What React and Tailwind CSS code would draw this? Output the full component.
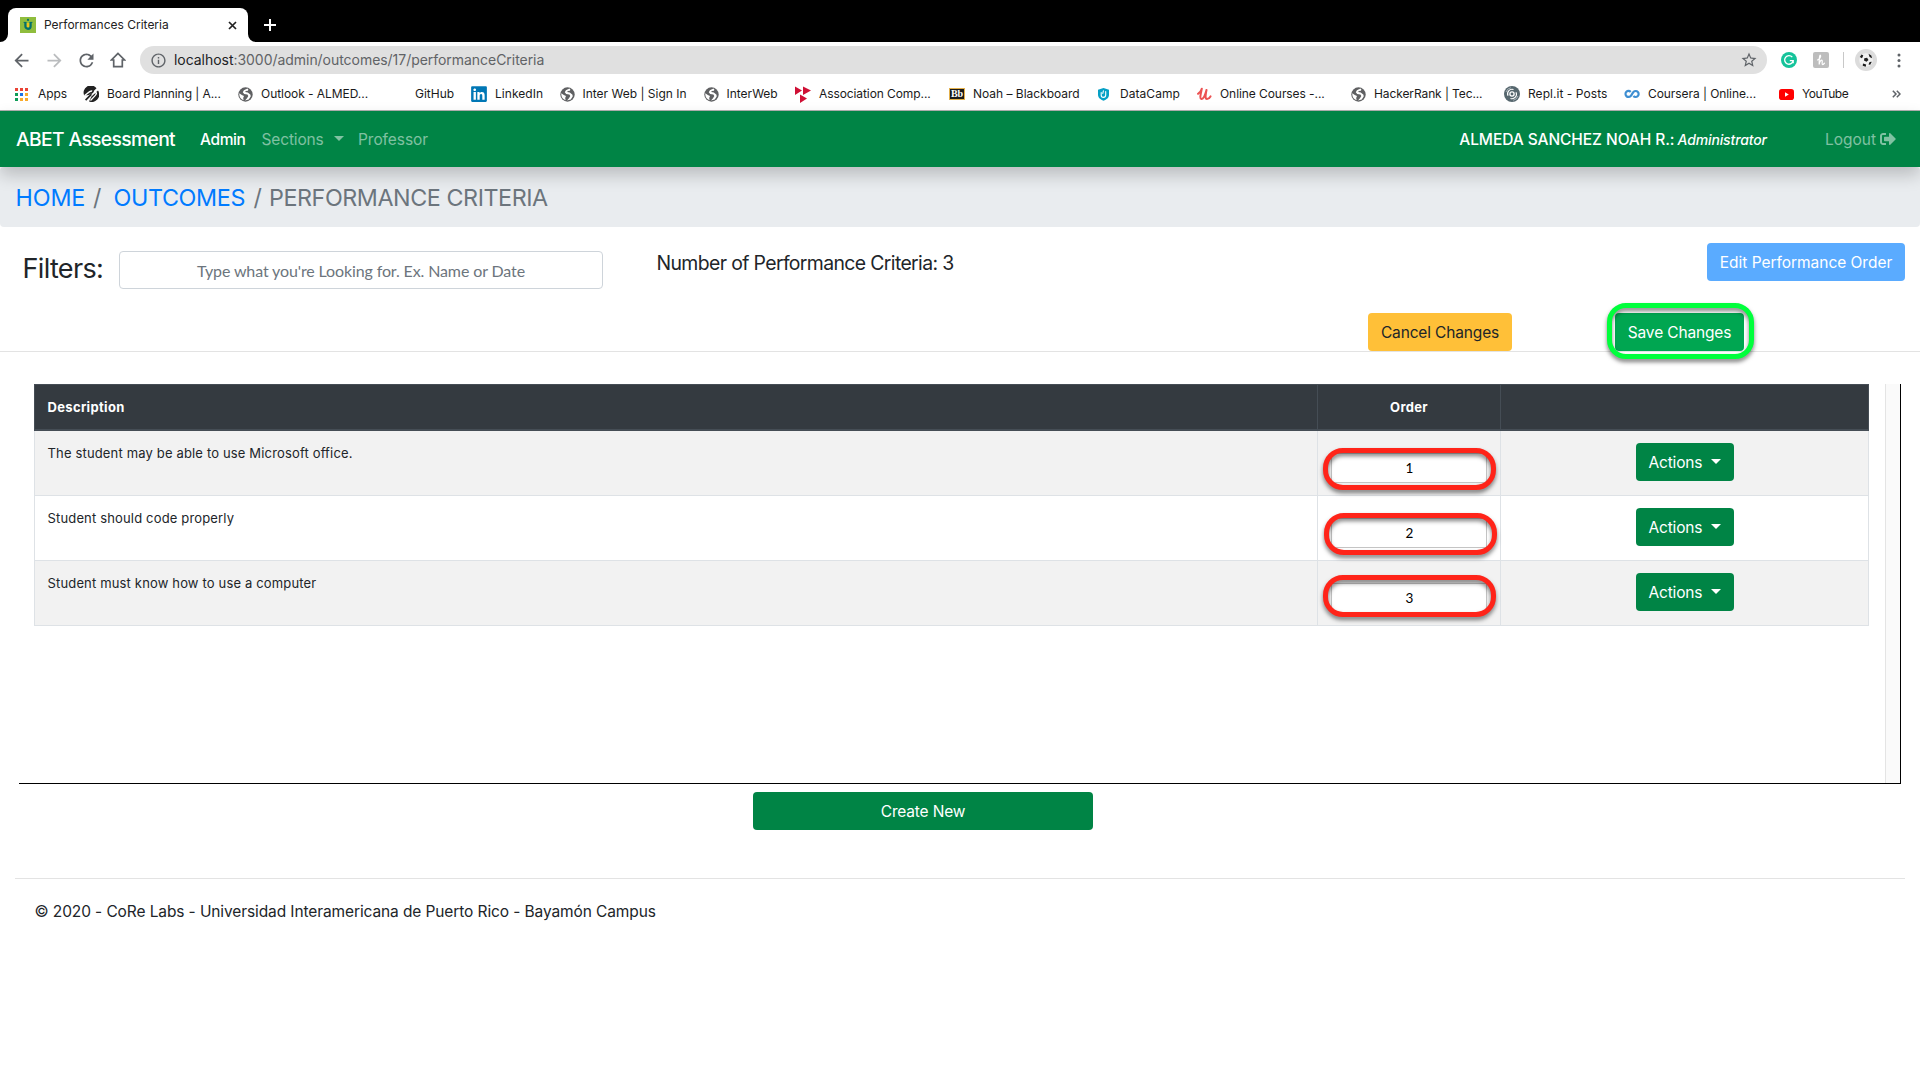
import React from 'react';
import { MdArrowBack, MdArrowForward, MdRefresh, MdInfoOutline, MdStarBorder } from 'react-icons/md';
import { FaSignOutAlt, FaLinkedin } from 'react-icons/fa';

function Favicon() {
  return (
    <svg width="16" height="16" viewBox="0 0 16 16">
      <rect width="16" height="16" fill="#8fbd3d" />
      <path d="M6.5 6h3v4h-3z" fill="#f0c419" />
      <path d="M5.4 5v4.2a2.6 2.6 0 0 0 5.2 0V5" fill="none" stroke="#04706b" strokeWidth="2.2" />
      <path d="M3.6 5.4h2.6M9.8 5.4h2.6" stroke="#04706b" strokeWidth="1" />
      <circle cx="8" cy="2.9" r="1.1" fill="#04706b" />
    </svg>
  );
}

function AppsIcon() {
  const cells = ['#ea4335', '#ea4335', '#ea4335', '#0f9d58', '#1a73e8', '#f9ab2b', '#0f9d58', '#f9ab2b', '#f9ab2b'];
  return (
    <svg width="13" height="13" viewBox="0 0 13 13">
      {cells.map((c, i) => (
        <rect key={i} x={(i % 3) * 5} y={Math.floor(i / 3) * 5} width="3" height="3" fill={c} />
      ))}
    </svg>
  );
}

function BoardIcon() {
  return (
    <svg width="16" height="16" viewBox="0 0 16 16">
      <path d="M1.2 9.5A7.2 7.2 0 0 1 13.5 2.2L9 6.8 6 9z" fill="#222" />
      <path d="M15 4.5A7.5 7.5 0 0 1 6 15.5L8.5 10.5l3-3z" fill="#222" />
      <path d="M1.5 9.8C4 7.8 6.5 5 8.8 5c2 .1 1.2 1.8 0 3L3.2 14" fill="none" stroke="#fff" strokeWidth="1.3" />
      <path d="M2.6 14.2L9 7.6c1.4-1.4 1.3-2.6 0-2.5" fill="none" stroke="#222" strokeWidth="1.7" />
      <path d="M8.8 8.8c1.5-1.5 3-2.6 4.1-2.2 1.1.4.3 1.8-.8 3L7.5 14.5" fill="none" stroke="#fff" strokeWidth="1.3" />
    </svg>
  );
}

function GlobeIcon() {
  return (
    <svg width="15" height="15" viewBox="0 0 15 15">
      <circle cx="7.5" cy="7.5" r="7.2" fill="#5f6062" />
      <path d="M9.5 1.6L5.9 3.2 4.8 5.3l1.4 1.6 3.2.5.9 1.6-1.3 2.2-2 2.3 3.7-1 2-3-.2-1.8-2.7-2.2-2.6-.4.6-1 2.1-.3.5-1z" fill="#fff" />
      <path d="M1.3 6.2l2.5 1.7 2.2 1.2-.8 1.9.4 2.2C2.9 12.4 1.3 10 1.3 7.5z" fill="#fff" />
    </svg>
  );
}

function AcmIcon() {
  return (
    <svg width="16" height="17" viewBox="0 0 16 17">
      <path d="M0 0.5l7 4-7 4.5zM8 0.5l8 4-8 4.5zM5 8.5l7 4-7 4.5z" fill="#cf1035" />
    </svg>
  );
}

function BbIcon() {
  return (
    <span className="flex h-[12px] w-[16px] items-center justify-center border border-[#e3b04b] bg-[#1b1b1b] font-['Liberation_Serif'] text-[10px] font-bold leading-none text-white">
      Bb
    </span>
  );
}

function DataCampIcon() {
  return (
    <svg width="14" height="14" viewBox="0 0 14 14">
      <path d="M7.5 1L13 2.7v5c0 3-2.5 4.8-5.5 6C4.5 12.5 2 10.7 2 7.7v-5z" fill="#06a0c5" />
      <path d="M5.2 5.6v2.7c0 1.3 1 2.1 2.2 2.1s2.3-.9 2.3-2.3V4.6M7.4 3.8L6.8 6.4" fill="none" stroke="#fff" strokeWidth="1.1" strokeLinecap="round" />
    </svg>
  );
}

function UdemyIcon() {
  return (
    <svg width="15" height="14" viewBox="0 0 15 14">
      <path d="M1 6.8C3 5.5 4.2 3.8 4.8 1.8 4.2 5 2.2 11.7 4.3 12c2.2.2 4-4.5 5.2-9C9 6 7.5 11.9 10 12c1.5 0 2.7-1.2 3.5-2.6" fill="none" stroke="#ec5252" strokeWidth="2" strokeLinecap="round" strokeLinejoin="round" />
    </svg>
  );
}

function ReplIcon() {
  return (
    <svg width="16" height="16" viewBox="0 0 16 16">
      <circle cx="8" cy="8" r="8" fill="#56676e" />
      <circle cx="8" cy="8" r="2.1" fill="none" stroke="#fff" strokeWidth="1.3" />
      <path d="M4 9.8A4.5 4.5 0 0 1 9.5 3.6M12 6.2A4.5 4.5 0 0 1 6.5 12.4" fill="none" stroke="#fff" strokeWidth="1.1" />
      <path d="M2 6A6.4 6.4 0 0 1 7 1.7M14 10A6.4 6.4 0 0 1 9 14.3" fill="none" stroke="#b9c2c6" strokeWidth=".8" />
    </svg>
  );
}

function CourseraIcon() {
  return (
    <svg width="16" height="10" viewBox="0 0 16 10">
      <path d="M6.7 2.9A3 3 0 1 0 6.7 7C8 5.8 8.2 4 9.6 2.8a3 3 0 1 1-.2 4.2" fill="none" stroke="#3f8fd2" strokeWidth="2.2" />
    </svg>
  );
}

function YouTubeIcon() {
  return (
    <svg width="15" height="11" viewBox="0 0 15 11">
      <rect width="15" height="11" rx="2.8" fill="#f00" />
      <path d="M6 3.2v4.6l3.8-2.3z" fill="#fff" />
    </svg>
  );
}

const bookmarks = [
  { label: 'Apps', icon: <AppsIcon />, w: 'w-[68px]', ls: 'tracking-[-0.1px]' },
  { label: 'Board Planning | A...', icon: <BoardIcon />, w: 'w-[155px]', ls: 'tracking-[-0.06px]', slot: true },
  { label: 'Outlook - ALMED...', icon: <GlobeIcon />, w: 'w-[154px]', ls: 'tracking-[-0.05px]' },
  { label: 'GitHub', icon: null, w: 'w-[79px]', ls: '' },
  { label: 'LinkedIn', icon: <FaLinkedin size={18} color="#0077b5" className="-ml-px shrink-0" />, w: 'w-[88.5px]', ls: 'tracking-[0.05px]', slot: true },
  { label: 'Inter Web | Sign In', icon: <GlobeIcon />, w: 'w-[144px]', ls: '' },
  { label: 'InterWeb', icon: <GlobeIcon />, w: 'w-[91.5px]', ls: '' },
  { label: 'Association Comp...', icon: <AcmIcon />, w: 'w-[154px]', ls: 'tracking-[-0.09px]', slot: true },
  { label: 'Noah – Blackboard', icon: <BbIcon />, w: 'w-[147px]', ls: 'tracking-[-0.02px]', slot: true },
  { label: 'DataCamp', icon: <DataCampIcon />, w: 'w-[101px]', ls: 'tracking-[0.05px]', slot: true },
  { label: 'Online Courses -...', icon: <UdemyIcon />, w: 'w-[154px]', ls: 'tracking-[-0.07px]' },
  { label: 'HackerRank | Tec...', icon: <GlobeIcon />, w: 'w-[153px]', ls: 'tracking-[-0.1px]' },
  { label: 'Repl.it - Posts', icon: <ReplIcon />, w: 'w-[120px]', ls: 'tracking-[0.05px]', slot: true },
  { label: 'Coursera | Online...', icon: <CourseraIcon />, w: 'w-[155px]', ls: 'tracking-[-0.07px]', slot: true },
  { label: 'YouTube', icon: <YouTubeIcon />, w: 'w-[113px]', ls: 'tracking-[-0.4px]' },
];

function Caret() {
  return (
    <svg width="10" height="5" viewBox="0 0 10 5" className="mb-[3px] shrink-0">
      <path d="M0 0h10L5 5z" fill="currentColor" />
    </svg>
  );
}

function BrowserChrome() {
  return (
    <div>
      <div className="flex h-[42px] items-end bg-black">
        <svg width="8" height="8" viewBox="0 0 8 8">
          <path d="M8 0v8H0a8 8 0 0 0 8-8z" fill="#fff" />
        </svg>
        <div className="flex h-[34px] w-[240px] items-center rounded-t-lg bg-white pl-3">
          <Favicon />
          <span className="ml-[8px] w-[180px] text-xs text-[#222]">Performances Criteria</span>
          <svg width="9" height="9" viewBox="0 0 9 9" className="ml-[4px]">
            <path d="M1 1l7 7M8 1L1 8" stroke="#222" strokeWidth="1.7" />
          </svg>
        </div>
        <svg width="8" height="8" viewBox="0 0 8 8">
          <path d="M0 0v8h8a8 8 0 0 1-8-8z" fill="#fff" />
        </svg>
        <svg width="12" height="12" viewBox="0 0 12 12" className="mb-[11px] ml-[8px]">
          <path d="M6 0v12M0 6h12" stroke="#fff" strokeWidth="2" />
        </svg>
      </div>
      <div className="flex h-[36px] items-center">
        <MdArrowBack size={21} color="#5f6368" className="ml-[11px]" />
        <MdArrowForward size={21} color="#babcbe" className="ml-[12px]" />
        <MdRefresh size={21} color="#5f6368" className="ml-[11px]" />
        <svg width="16" height="16" viewBox="0 0 16 16" className="ml-[13px]">
          <path d="M8 1.4L1.5 8H3.7v6.7h8.6V8h2.2z" fill="none" stroke="#5f6368" strokeWidth="1.7" />
        </svg>
        <div className="ml-[14px] flex h-7 w-[1627px] items-center rounded-full bg-[#e0e0e0] pl-[10px] pr-[9px]">
          <MdInfoOutline size={17} color="#5f6368" />
          <span className="ml-[7px] grow text-sm tracking-[-0.04px] text-[#606366]">
            <span className="text-[#202124]">localhost</span>:3000/admin/outcomes/17/performanceCriteria
          </span>
          <MdStarBorder size={18} color="#5f6368" />
        </div>
        <svg width="16" height="16" viewBox="0 0 16 16" className="ml-[14px]">
          <circle cx="8" cy="8" r="8" fill="#15c39a" />
          <path d="M11.3 5.2A4.3 4.3 0 1 0 12.2 8.6H8.8M12.2 8.6v2.6" fill="none" stroke="#fff" strokeWidth="1.3" />
        </svg>
        <svg width="16" height="16" viewBox="0 0 16 16" className="ml-[16px]">
          <rect width="16" height="16" rx="2" fill="#bdbdbd" />
          <path d="M4.5 8C6.5 7.3 8.2 4.5 7.5 3.3 6.3 2.7 6.2 8 6.2 12.5 6.5 9.5 8 7.8 9 8.3c.9.6-.6 3.7.5 4.2.9.2 1.5-.6 2-1.3" fill="none" stroke="#fff" strokeWidth="1.2" strokeLinecap="round" />
        </svg>
        <div className="ml-[14px] h-4 w-px bg-[#c8c8c8]" />
        <svg width="22" height="22" viewBox="0 0 22 22" className="ml-[11px]">
          <circle cx="11" cy="11" r="11" fill="#dcdcdc" />
          <circle cx="11" cy="11" r="6.8" fill="#f0f0f0" />
          <path d="M9.3 9.2l2.8-.5 1.4 2.2-2 1.9-2.5-1.2zM4.8 8l1.8-2.6 1.7 1L7 9.2zM13.5 4.8l2.8 1.8.8 2.6-2.5-1.2zM8 14.6l3.2.8-.5 2.3-3-.9zM14.6 13l2.2-.2-1.6 3-1.7-.4z" fill="#1c1c1c" />
        </svg>
        <svg width="4" height="16" viewBox="0 0 4 16" className="ml-[19.5px]">
          <circle cx="2" cy="3" r="1.5" fill="#5f6368" />
          <circle cx="2" cy="8.5" r="1.5" fill="#5f6368" />
          <circle cx="2" cy="14" r="1.5" fill="#5f6368" />
        </svg>
      </div>
      <div className="flex h-[33px] items-center border-b border-[#b0b0b0] pl-[15px]">
        {bookmarks.map((b) => (
          <div key={b.label} className={`flex shrink-0 items-center ${b.w}`}>
            <div className={`flex shrink-0 items-center ${b.slot ? 'w-[24px]' : 'w-[23px]'}`}>{b.icon}</div>
            <span className={`whitespace-nowrap text-xs text-[#1a1a1a] ${b.ls}`}>{b.label}</span>
          </div>
        ))}
        <svg width="9" height="8" viewBox="0 0 9 8">
          <path d="M.8 .8L4 4 .8 7.2M4.8 .8L8 4 4.8 7.2" fill="none" stroke="#5f6368" strokeWidth="1.5" />
        </svg>
      </div>
    </div>
  );
}

function NavBar() {
  return (
    <nav className="relative z-10 flex h-[56px] items-center bg-[#008445] pl-4 pr-6 text-[15.5px] text-white shadow-[0_8px_16px_rgba(0,0,0,0.2)]">
      <span className="w-[184px] whitespace-nowrap text-[19.3px] font-medium tracking-[-0.65px]">ABET Assessment</span>
      <span className="w-[61.5px] pt-[2px] font-medium tracking-[-0.4px]">Admin</span>
      <span className="flex w-[96.5px] items-center pt-[2px] text-white/50">
        <span className="w-[72px] tracking-[-0.15px]">Sections</span>
        <Caret />
      </span>
      <span className="pt-[2px] tracking-[-0.05px] text-white/50">Professor</span>
      <span className="ml-auto flex items-baseline pt-[2px] font-medium">
        <span className="tracking-[-0.08px]">ALMEDA SANCHEZ NOAH R.:</span>
        <span className="ml-[3px] text-[14px] italic tracking-[-0.13px]">Administrator</span>
      </span>
      <span className="ml-[58px] flex items-center text-white/50">
        <span className="pt-[2px]">Logout</span>
        <FaSignOutAlt size={16} className="ml-[4px]" />
      </span>
    </nav>
  );
}

function Breadcrumb() {
  return (
    <div className="flex h-[60px] items-center whitespace-nowrap rounded bg-[#e9ecef] pl-[15.5px] pt-[2px] text-[23.3px] tracking-[-0.35px] text-[#6c757d]">
      <span className="w-[77.5px] tracking-[-0.1px] text-[#007bff]">HOME</span>
      <span className="w-[20.5px]">/</span>
      <span className="w-[140px] text-[#007bff]">OUTCOMES</span>
      <span className="w-[15.5px]">/</span>
      <span className="tracking-[-0.43px]">PERFORMANCE CRITERIA</span>
    </div>
  );
}

function Toolbar() {
  return (
    <div className="flex h-[125px] flex-col border-b border-[#e3e3e3]">
      <div className="flex h-[86px] items-start">
        <span className="ml-[22.5px] mt-[22px] w-[96.5px] text-[27px] leading-[40px] tracking-[-0.66px] text-[#212529]">Filters:</span>
        <input
          className="mt-6 h-[38px] w-[484px] rounded border border-[#ced4da] text-center font-['Lato'] text-base tracking-[-0.12px] placeholder:text-[#6c757d]"
          placeholder="Type what you're Looking for. Ex. Name or Date"
        />
        <span className="ml-[53.5px] mt-[24px] whitespace-nowrap text-[19.4px] leading-6 tracking-[-0.62px] text-[#212529]">
          Number of Performance Criteria: 3
        </span>
        <button className="ml-auto mr-[15px] mt-4 h-[38px] w-[198px] rounded bg-[#5aabff] pt-[2px] text-[15.5px] tracking-[-0.03px] text-white">
          Edit Performance Order
        </button>
      </div>
      <div className="flex h-[38px] text-[15.5px] tracking-[-0.15px]">
        <button className="ml-[1368px] h-[38px] w-[144px] rounded bg-[#ffc038] pt-[2px] text-[#212529]">Cancel Changes</button>
        <div className="relative ml-[103px] h-[38px] w-[129px]">
          <button className="h-[38px] w-[129px] rounded bg-[#00a651] pt-[2px] text-white">Save Changes</button>
          <div className="absolute -left-[8px] -top-[10px] h-[56px] w-[147px] rounded-[19px] border-[5px] border-[#00ff3c] drop-shadow-[0_3px_2px_rgba(0,0,0,0.5)]" />
        </div>
      </div>
    </div>
  );
}

const rows = [
  { text: 'The student may be able to use Microsoft office.', order: 1, bg: 'bg-[#f2f2f2]', ring: 'left-[5px] top-[17px]' },
  { text: 'Student should code properly', order: 2, bg: 'bg-white', ring: 'left-[6px] top-[17px]' },
  { text: 'Student must know how to use a computer', order: 3, bg: 'bg-[#f2f2f2]', ring: 'left-[5px] top-[14px]' },
];

function CriteriaTable() {
  return (
    <div className="ml-[15px] w-[1835px] text-[13px]">
      <div className="flex h-[47px] items-stretch border border-b-2 border-[#454d55] bg-[#343a40] font-bold tracking-[0.33px] text-white">
        <div className="flex w-[1282px] items-center pl-[12.5px] pt-[2px]">Description</div>
        <div className="flex w-[183px] items-center justify-center border-l border-[#454d55] pt-[2px]">Order</div>
        <div className="grow border-l border-[#454d55]" />
      </div>
      {rows.map((r) => (
        <div key={r.order} className={`flex h-[65px] border-x border-b border-[#dee2e6] ${r.bg}`}>
          <div className="w-[1282px] pl-[12.5px] pt-3 leading-5 tracking-[0.16px] text-[#212529]">{r.text}</div>
          <div className="relative w-[183px] border-l border-[#dee2e6] pl-[13px] pt-[22px]">
            <div className="flex h-[30px] w-[156px] items-center justify-center border border-[#c4c4c4] bg-white pl-px font-['Lato'] text-[13.5px] leading-[20px] text-black">{r.order}</div>
            <div className={`absolute h-[42px] w-[173px] rounded-[20px] border-[5px] border-[#ff2419] drop-shadow-[0_3px_2px_rgba(0,0,0,0.5)] ${r.ring}`} />
          </div>
          <div className="flex grow justify-center border-l border-[#dee2e6] pt-3">
            <button className="flex h-[38px] w-[98px] items-center rounded bg-[#008445] pl-[13px] pt-[2px] text-[15.5px] tracking-[-0.17px] text-white">
              <span className="w-[62px] text-left">Actions</span>
              <Caret />
            </button>
          </div>
        </div>
      ))}
    </div>
  );
}

export default function App() {
  return (
    <div className="h-[1080px] w-[1920px] overflow-hidden bg-white font-['Inter',sans-serif]">
      <BrowserChrome />
      <NavBar />
      <Breadcrumb />
      <Toolbar />
      <div className="ml-[19px] mt-8 flex h-[400px] w-[1882px] justify-between border-b border-r border-black">
        <CriteriaTable />
        <div className="h-full w-[15px] border-l border-[#e4e4e4] bg-[#fafafa]" />
      </div>
      <button className="ml-[753px] mt-2 block h-[38px] w-[340px] rounded bg-[#008445] pt-[2px] text-[15.5px] tracking-[-0.18px] text-white">
        Create New
      </button>
      <div className="mx-[15px] mt-12 border-t border-[#e3e3e3] pl-[19.5px] pt-[21px] text-[15.5px] leading-6 tracking-[-0.105px] text-[#212529]">
        © 2020 - CoRe Labs - Universidad Interamericana de Puerto Rico - Bayamón Campus
      </div>
    </div>
  );
}
